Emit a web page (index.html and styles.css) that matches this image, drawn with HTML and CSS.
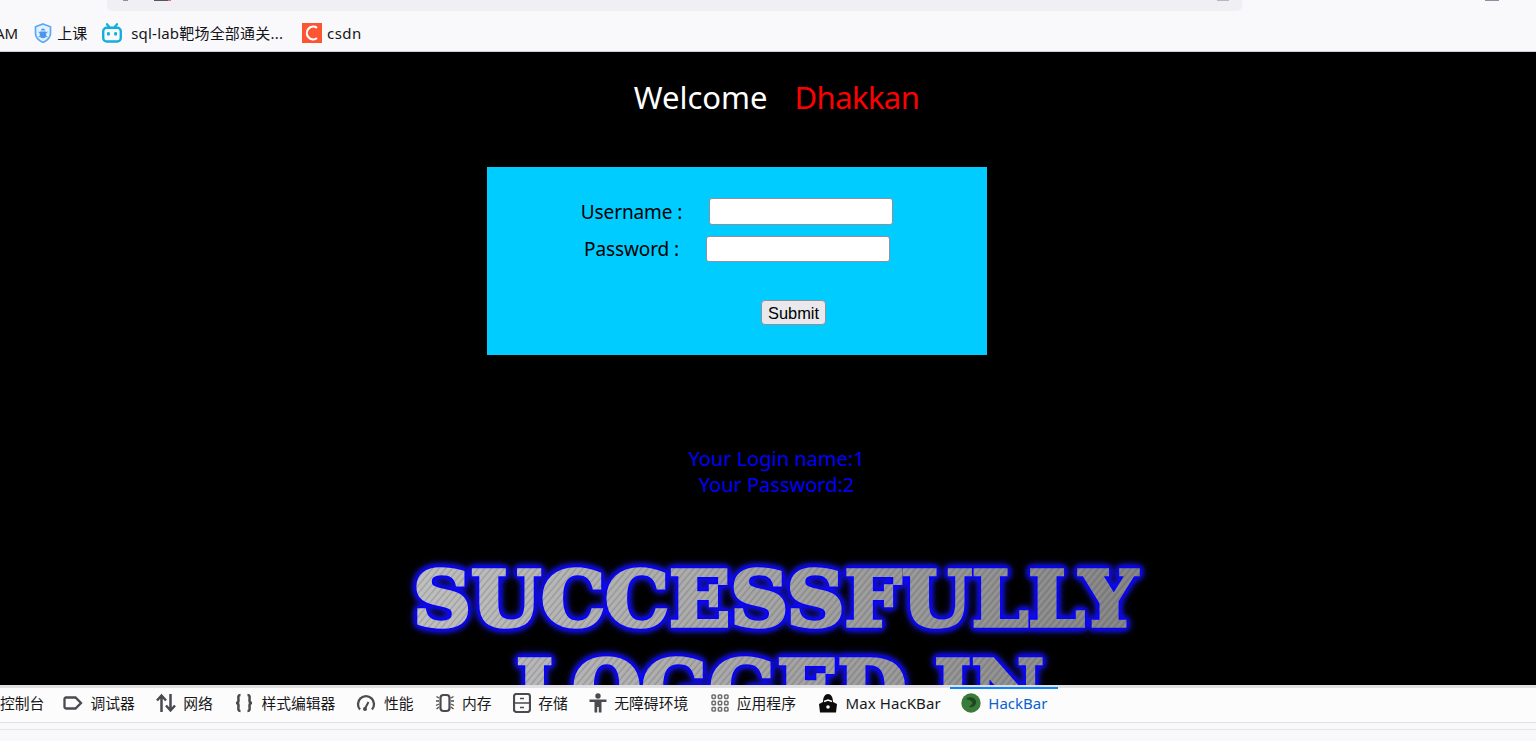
FILE: index.html
```html
<!DOCTYPE html>
<html lang="zh">
<head>
    <meta charset="UTF-8">
    <meta name="viewport" content="width=device-width, initial-scale=1.0">
    <title>Less-11</title>
    <link rel="stylesheet" href="styles.css">
</head>
<body>

<!-- Barra del navegador -->
<header class="chrome">
    <div class="urlbar">
        <span class="url-bit url-bit-a"></span>
        <span class="url-bit url-bit-b"></span>
        <span class="url-bit url-bit-c"></span>
    </div>
    <span class="corner-bit"></span>
    <nav class="bookmarks">
        <span class="mark mark-cut">AM</span>
        <a class="mark mark-class">
            <svg class="mark-icon" viewBox="0 0 20 20">
                <path d="M10 1 L17.5 3.8 V10.5 C17.5 14.5 14 17.5 10 19.5 C6 17.5 2.5 14.5 2.5 10.5 V3.8 Z" fill="#e3f0fe" stroke="#5aa9f5" stroke-width="1.7"/>
                <path d="M6.8 8.5 h6.4 v3.5 a3.2 3.2 0 0 1 -6.4 0 Z M8 7.6 a2 2 0 0 1 4 0 Z" fill="#4a97ec"/>
                <path d="M5.5 9 L7 10 M5.5 14 L7 13 M14.5 9 L13 10 M14.5 14 L13 13" stroke="#4a97ec" stroke-width="1"/>
            </svg>
            上课
        </a>
        <a class="mark mark-sql">
            <svg class="mark-icon mark-icon-bili" viewBox="0 0 20 20">
                <path d="M5 1.2 L7.6 4.5 M15 1.2 L12.4 4.5" stroke="#12aee0" stroke-width="2.2" stroke-linecap="round"/>
                <rect x="1.2" y="4.8" width="17.6" height="13.7" rx="3.5" fill="none" stroke="#12aee0" stroke-width="2.4"/>
                <rect x="5" y="9" width="2.8" height="3.6" rx="1.2" fill="#12aee0"/>
                <rect x="12.2" y="9" width="2.8" height="3.6" rx="1.2" fill="#12aee0"/>
            </svg>
            sql-lab靶场全部通关...
        </a>
        <a class="mark mark-csdn">
            <svg class="mark-icon" viewBox="0 0 20 20">
                <rect width="20" height="20" fill="#fc5531"/>
                <path d="M15 4.8 A6.4 6.4 0 1 0 15 15.2" fill="none" stroke="#fff" stroke-width="2.2"/>
            </svg>
            csdn
        </a>
    </nav>
</header>

<!-- Contenido de la pagina -->
<main class="page">
    <p class="welcome">Welcome<span class="welcome-name">Dhakkan</span></p>

    <form class="login-box">
        <div class="field field-user">
            <label>Username :</label>
            <input type="text">
        </div>
        <div class="field field-pass">
            <label>Password :</label>
            <input type="password">
        </div>
        <button type="button" class="submit">Submit</button>
    </form>

    <p class="result">Your Login name:1<br>Your Password:2</p>

    <svg class="banner" viewBox="0 0 760 130" width="760" height="130">
        <defs>
            <pattern id="lines" width="5" height="5" patternUnits="userSpaceOnUse" patternTransform="rotate(-50)">
                <rect width="5" height="1" fill="#5c5c5c" fill-opacity="0.3"/>
                <rect y="2.5" width="5" height="0.8" fill="#e6e6e6" fill-opacity="0.22"/>
            </pattern>
            <linearGradient id="shade" gradientUnits="userSpaceOnUse" x1="0" x2="760" y1="0" y2="0">
                <stop offset="0" stop-color="#bdbdbd"/>
                <stop offset="0.4" stop-color="#a6a6a6"/>
                <stop offset="1" stop-color="#7d7d7d"/>
            </linearGradient>
            <pattern id="steel" width="760" height="180" patternUnits="userSpaceOnUse">
                <rect width="760" height="180" fill="url(#shade)"/>
                <rect width="760" height="180" fill="url(#lines)"/>
            </pattern>
        </defs>
        <text class="banner-text" x="18" y="68" textLength="724" lengthAdjust="spacingAndGlyphs">SUCCESSFULLY</text>
        <text class="banner-text banner-low" x="121" y="157" textLength="528" lengthAdjust="spacingAndGlyphs">LOGGED IN</text>
    </svg>
</main>

<!-- Herramientas de desarrollo -->
<footer class="devtools">
    <div class="tabs">
        <a class="tab tab-first">控制台</a>
        <a class="tab">
            <svg class="tab-icon" viewBox="0 0 20 20"><path d="M3 4.5 H12.5 L18 10 L12.5 15.5 H3 A1.5 1.5 0 0 1 1.5 14 V6 A1.5 1.5 0 0 1 3 4.5 Z" fill="none" stroke="#4a4a4f" stroke-width="2.3"/></svg>
            调试器
        </a>
        <a class="tab">
            <svg class="tab-icon" viewBox="0 0 20 20"><path d="M5.5 19 V3 M1 7.5 L5.5 2.5 L10 7.5 M14.5 1 V17 M10 12.5 L14.5 17.5 L19 12.5" fill="none" stroke="#4a4a4f" stroke-width="2.5"/></svg>
            网络
        </a>
        <a class="tab">
            <svg class="tab-icon" viewBox="0 0 20 20"><path d="M6.5 2 C3.5 2 4.5 5 4.5 7.5 C4.5 9 3.5 10 2 10 C3.5 10 4.5 11 4.5 12.5 C4.5 15 3.5 18 6.5 18 M13.5 2 C16.5 2 15.5 5 15.5 7.5 C15.5 9 16.5 10 18 10 C16.5 10 15.5 11 15.5 12.5 C15.5 15 16.5 18 13.5 18" fill="none" stroke="#4a4a4f" stroke-width="2.5"/></svg>
            样式编辑器
        </a>
        <a class="tab">
            <svg class="tab-icon" viewBox="0 0 20 20"><path d="M4 16.5 A8 8 0 1 1 16 16.5" fill="none" stroke="#4a4a4f" stroke-width="2.3"/><path d="M9 15.5 L12.5 9" stroke="#4a4a4f" stroke-width="2"/><circle cx="9" cy="16" r="2" fill="#4a4a4f"/></svg>
            性能
        </a>
        <a class="tab">
            <svg class="tab-icon" viewBox="0 0 20 20"><rect x="5.5" y="2" width="9" height="16" rx="3" fill="none" stroke="#4a4a4f" stroke-width="2.2"/><path d="M4 5 L1.5 3.5 M4 8 H1 M4 11 L1 12.5 M4 14 L1.5 16 M16 5 L18.5 3.5 M16 8 H19 M16 11 L19 12.5 M16 14 L18.5 16" stroke="#4a4a4f" stroke-width="1.3"/></svg>
            内存
        </a>
        <a class="tab">
            <svg class="tab-icon tab-icon-narrow" viewBox="0 0 18 20"><rect x="1" y="1" width="16" height="18" rx="2.5" fill="none" stroke="#4a4a4f" stroke-width="2.2"/><path d="M1 10 H17 M7 5.5 H11 M7 14.5 H11" stroke="#4a4a4f" stroke-width="1.6"/></svg>
            存储
        </a>
        <a class="tab">
            <svg class="tab-icon tab-icon-narrow" viewBox="0 0 18 20"><circle cx="9" cy="3" r="2.7" fill="#4a4a4f"/><path d="M0.5 6.5 H17.5 V9 H12.5 V19.5 H9.8 V14 H8.2 V19.5 H5.5 V9 H0.5 Z" fill="#4a4a4f"/></svg>
            无障碍环境
        </a>
        <a class="tab tab-apps">
            <svg class="tab-icon tab-icon-narrow" viewBox="0 0 18 20">
                <g fill="none" stroke="#6d6d72" stroke-width="1.5">
                    <rect x="1" y="2" width="3.4" height="3.4" rx=".8"/><rect x="7.3" y="2" width="3.4" height="3.4" rx=".8"/><rect x="13.6" y="2" width="3.4" height="3.4" rx=".8"/>
                    <rect x="1" y="8.3" width="3.4" height="3.4" rx=".8"/><rect x="7.3" y="8.3" width="3.4" height="3.4" rx=".8"/><rect x="13.6" y="8.3" width="3.4" height="3.4" rx=".8"/>
                    <rect x="1" y="14.6" width="3.4" height="3.4" rx=".8"/><rect x="7.3" y="14.6" width="3.4" height="3.4" rx=".8"/><rect x="13.6" y="14.6" width="3.4" height="3.4" rx=".8"/>
                </g>
            </svg>
            应用程序
        </a>
        <a class="tab tab-max">
            <svg class="tab-icon" viewBox="0 0 20 20"><path d="M5 9 C5 4 7 1 10 1 C13 1 15 4 15 9 L19 11 L18 19.5 H2 L1 11 Z" fill="#0c0c0d"/><path d="M6 8.5 L10 7 L14 8.5" stroke="#fff" stroke-width="1.4" fill="none"/><circle cx="10" cy="14" r="1.8" fill="#fff"/></svg>
            Max HacKBar
        </a>
        <a class="tab tab-active">
            <svg class="tab-icon" viewBox="0 0 20 20"><circle cx="10" cy="10" r="9.7" fill="#3a7a3a"/><path d="M5 6 C8 3 14 4 15 8 C16 12 12 15 8 14 L11 11 C12 9 10 7 5 6 Z" fill="#1c4a1f"/></svg>
            HackBar
        </a>
    </div>
    <div class="devtools-sub"></div>
</footer>

</body>
</html>
```

FILE: styles.css
```css
/* Estilos generales */
html, body {
    height: 100%;
}
body {
    margin: 0;
    display: flex;
    flex-direction: column;
    height: 741px;
    overflow: hidden;
    font-family: "Noto Sans", "Noto Sans CJK SC", sans-serif;
    background: #000;
}

/* Barra del navegador */
.chrome {
    position: relative;
    height: 51px;
    flex: none;
    background: #f9f9fb;
    border-bottom: 1px solid #cfcfd8;
}
.urlbar {
    position: absolute;
    top: -10px;
    left: 107px;
    width: 1135px;
    height: 21px;
    background: #f0f0f4;
    border-radius: 5px;
}
.url-bit {
    position: absolute;
    bottom: 10px;
    height: 2px;
    background: #8f8f9d;
}
.url-bit-a {
    left: 16px;
    width: 5px;
}
.url-bit-b {
    left: 47px;
    width: 17px;
    background: linear-gradient(90deg, #55555c 80%, #f5607a 80%);
}
.url-bit-c {
    left: 1110px;
    width: 12px;
    background: #b8b8c0;
}
.corner-bit {
    position: absolute;
    top: 0;
    left: 1485px;
    width: 14px;
    height: 1px;
    background: #8f8f9d;
}
.bookmarks {
    display: flex;
    align-items: center;
    height: 100%;
    padding-top: 15px;
    box-sizing: border-box;
    font-size: 15px;
    line-height: 20px;
    color: #15141a;
}
.mark {
    display: flex;
    align-items: center;
    gap: 4px;
    margin-right: 15px;
    white-space: nowrap;
}
.mark-cut {
    margin-left: -5px;
    margin-right: 15px;
}
.mark-class {
    margin-right: 15px;
}
.mark-sql {
    margin-right: 19px;
    gap: 9px;
    letter-spacing: 0.2px;
}
.mark-csdn {
    gap: 5px;
    letter-spacing: 0.4px;
}
.mark-icon {
    width: 20px;
    height: 20px;
    flex: none;
}

/* Contenido de la pagina */
.page {
    flex: 1;
    min-height: 0;
    overflow: hidden;
    background: #000;
}
.welcome {
    margin: 23px 0 0;
    padding-left: 17px;
    font-size: 31px;
    line-height: 44px;
    color: #fff;
    text-align: center;
}
.welcome-name {
    margin-left: 27px;
    letter-spacing: -0.6px;
    color: #f00;
}

/* Formulario */
.login-box {
    box-sizing: border-box;
    width: 500px;
    height: 188px;
    margin: 48px 0 0 487px;
    padding-top: 31px;
    background: #0cf;
    color: #000;
    font-size: 19px;
    letter-spacing: -0.1px;
}
.field {
    display: flex;
    justify-content: center;
    align-items: center;
    gap: 27px;
    height: 27px;
}
.field-pass {
    margin-top: 11px;
    height: 26px;
}
.field input {
    box-sizing: border-box;
    width: 184px;
    height: 100%;
    padding: 0 2px;
    background: #fff;
    border: 1px solid #8f8f9d;
    border-radius: 3px;
}
.submit {
    display: block;
    box-sizing: border-box;
    width: 65px;
    height: 25px;
    margin: 38px 0 0 274px;
    padding: 1px 0 0;
    background: #e9e9ed;
    border: 1px solid #8f8f9d;
    border-radius: 4px;
    font-family: "Liberation Sans", sans-serif;
    font-size: 16.4px;
    letter-spacing: 0;
    color: #000;
}

/* Resultado */
.result {
    margin: 91px 0 0;
    padding-left: 17px;
    font-size: 20px;
    line-height: 26px;
    color: #00f;
    text-align: center;
}

/* Imagen del mensaje */
.banner {
    display: block;
    margin: 60px 0 0 395px;
    overflow: visible;
}
.banner-text {
    font-family: "DejaVu Serif", "Liberation Serif", serif;
    font-weight: bold;
    font-size: 76px;
    fill: url(#steel);
    stroke: url(#steel);
    stroke-width: 3.6px;
    filter: drop-shadow(0 0 1.5px #00f) drop-shadow(0 0 2px #00f) drop-shadow(0 0 2px #10f) drop-shadow(0 0 3px #22f);
}

/* Herramientas de desarrollo */
.devtools {
    flex: none;
    height: 56px;
    box-sizing: border-box;
    background: #f9f9fb;
    border-top: 3px solid #e0e0e2;
}
.tabs {
    display: flex;
    height: 34px;
    background: #fcfcfc;
    border-bottom: 1px solid #e0e0e2;
    font-size: 14.8px;
    line-height: 20px;
    color: #18181a;
}
.tab {
    display: flex;
    align-items: center;
    gap: 7.5px;
    box-sizing: border-box;
    height: 30px;
    padding: 0 10.5px;
    white-space: nowrap;
}
.tab-first {
    padding-left: 0;
    padding-right: 8px;
}
.tab-icon {
    width: 20px;
    height: 20px;
    flex: none;
}
.tab-icon-narrow {
    width: 18px;
}
.tab-apps {
    margin-left: 2px;
}
.tab-max {
    margin-left: 1px;
    font-size: 15px;
    letter-spacing: 0.1px;
}
.tab-active {
    position: relative;
    margin-left: -1px;
    font-size: 15px;
    color: #0a62d0;
}
.tab-active::before {
    content: "";
    position: absolute;
    top: -1px;
    left: 0;
    right: 0;
    height: 2px;
    background: #0a84ff;
}
.devtools-sub {
    height: 6px;
    border-bottom: 1px solid #e6e6e8;
}
```
